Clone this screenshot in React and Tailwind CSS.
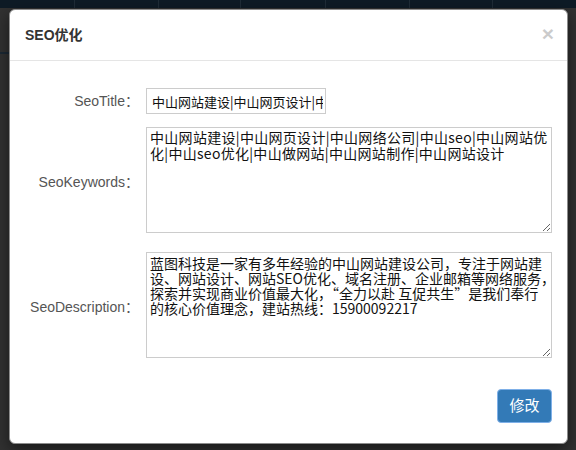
export default function App() {
  const title =
    "中山网站建设|中山网页设计|中山网络公司|中山seo|中山网站优化|中山seo优化|中山做网站|中山网站制作|中山网站设计";
  const kw =
    "中山网站建设|中山网页设计|中山网络公司|中山seo|中山网站优\n化|中山seo优化|中山做网站|中山网站制作|中山网站设计";
  const desc =
    "蓝图科技是一家有多年经验的中山网站建设公司，专注于网站建\n设、网站设计、网站SEO优化、域名注册、企业邮箱等网络服务，\n探索并实现商业价值最大化，“全力以赴 互促共生”是我们奉行\n的核心价值理念，建站热线：15900092217";
  const sans = { fontFamily: '"Liberation Sans", "Noto Sans CJK SC", sans-serif' };
  const cjk = { fontFamily: '"Noto Sans CJK SC", sans-serif' };

  return (
    <div
      className="relative w-[576px] h-[450px] overflow-hidden bg-[#313131] flex flex-col"
      style={sans}
    >
      {/* page behind the overlay */}
      <div className="h-[8px] shrink-0 bg-[#0e1b26] flex">
        <div className="w-[75px] border-r border-[#1f2c37]" />
        <div className="w-[84px] border-r border-[#1f2c37]" />
        <div className="w-[82px] border-r border-[#1f2c37]" />
        <div className="w-[85px] border-r border-[#1f2c37]" />
        <div className="w-[84px] border-r border-[#1f2c37]" />
        <div className="w-[83px] border-r border-[#1f2c37]" />
        <div className="flex-1" />
      </div>
      <div className="absolute left-0 top-[52px] w-[20px] h-[2px] bg-[#1b2834]" />

      {/* modal */}
      <div className="relative ml-[9px] mt-[1px] w-[559px] h-[435px] bg-white rounded-[6px] border border-[#8c8c8c] shadow-[0_5px_15px_rgba(0,0,0,0.5)] flex flex-col">
        <div className="h-[51px] shrink-0 border-b border-[#e5e5e5] flex items-center justify-between pl-[15px] pr-[13px]">
          <span className="text-[14px] font-bold text-[#333]">SEO优化</span>
          <span className="text-[21px] font-bold leading-none text-[#000] opacity-20 -mt-[4px]">×</span>
        </div>

        <div className="pt-[27px] pr-[15px] flex flex-col">
          <div className="flex items-center">
            <label className="w-[129px] shrink-0 text-right text-[14px] text-[#555]">SeoTitle：</label>
            <input
              readOnly
              value={title}
              className="ml-[7px] w-[180px] h-[26px] border border-[#cccccc] pl-[5px] pr-[2px] text-[13px] text-[#111] outline-none"
              style={cjk}
            />
          </div>

          <div className="flex items-center mt-[13px]">
            <label className="w-[129px] shrink-0 text-right text-[14px] text-[#555] mt-[4px]">SeoKeywords：</label>
            <textarea
              readOnly
              wrap="off"
              value={kw}
              className="ml-[7px] w-[406px] h-[106px] border border-[#cccccc] pl-[3px] pr-[3px] pt-[1px] text-[14px] leading-[16px] tracking-[0.3px] text-[#111] outline-none overflow-hidden resize"
              style={cjk}
            />
          </div>

          <div className="flex items-center mt-[19px]">
            <label className="w-[129px] shrink-0 text-right text-[14px] text-[#555] mt-[4px]">SeoDescription：</label>
            <textarea
              readOnly
              wrap="off"
              value={desc}
              className="ml-[7px] w-[406px] h-[106px] border border-[#cccccc] pl-[3px] pr-[3px] pt-[3px] text-[14px] leading-[15px] text-[#111] outline-none overflow-hidden resize"
              style={cjk}
            />
          </div>
        </div>

        <div className="flex justify-end pr-[15px] mt-[31px]">
          <button className="w-[55px] h-[34px] rounded-[4px] bg-[#337ab7] border border-[#7fb0e8] text-white text-[15px]">
            修改
          </button>
        </div>
      </div>
    </div>
  );
}
